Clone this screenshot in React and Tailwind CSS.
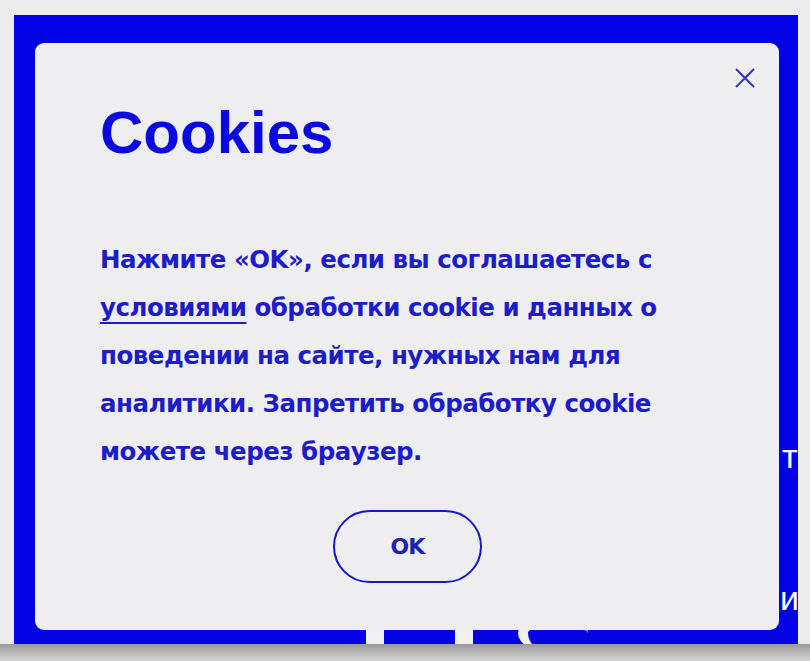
import React from 'react';

const font = { fontFamily: '"Liberation Sans", Arial, sans-serif' };
const bodyFont = { fontFamily: '"DejaVu Sans", Verdana, sans-serif' };

export default function App() {
  return (
    <div className="w-[810px] h-[661px] bg-[#ececec] flex flex-col overflow-hidden" style={font}>
      <div className="h-[15px]" />
      <div className="pl-[14px]">
        <div className="relative w-[784px] h-[629px] bg-[#0303e4] overflow-hidden pl-[21px] pt-[28px]">
          {/* page content behind the dialog */}
          <span className="absolute left-[768px] top-[424px] text-[34px] leading-none text-white font-normal">т</span>
          <span className="absolute left-[766px] top-[566px] text-[34px] leading-none text-white font-normal">и</span>
          <div className="absolute left-[352px] top-[600px] w-[18px] h-[40px] bg-[#f0f0f2]" />
          <div className="absolute left-[441px] top-[600px] w-[18px] h-[40px] bg-[#f0f0f2]" />
          <div className="absolute left-[504px] top-[598px] w-[70px] h-[40px] rounded-[50%] border-t-[12px] border-l-[10px] border-[#f0f0f2]" />

          <div className="relative w-[744px] h-[587px] bg-[#eeeef1] rounded-[9px] pl-[65px] pt-[54px]">
            <button className="absolute right-[24px] top-[25px] w-[20px] h-[20px] flex items-center justify-center text-[#3434c8]">
              <svg width="20" height="20" viewBox="0 0 20 20" fill="none" stroke="currentColor" strokeWidth="2">
                <path d="M1 1 L19 19 M19 1 L1 19" />
              </svg>
            </button>
            <h1 className="text-[60px] leading-[72px] font-bold text-[#0a0ae0]">Cookies</h1>
            <p className="mt-[67px] w-[610px] text-[24.5px] leading-[48px] font-bold text-[#1c1cc9] tracking-[-0.5px]" style={bodyFont}>
              Нажмите «OK», если вы соглашаетесь с{' '}
              <a className="underline decoration-2 underline-offset-[6px]">условиями</a> обработки cookie и данных о
              поведении на сайте, нужных нам для аналитики. Запретить обработку cookie можете через браузер.
            </p>
            <div className="mt-[34px] pl-[233px]">
              <button className="w-[149px] h-[73px] rounded-full border-[2.5px] border-[#1616cc] text-[22px] font-bold text-[#2020b8] tracking-[-0.8px]" style={bodyFont}>
                OK
              </button>
            </div>
          </div>
        </div>
      </div>
      <div className="h-[17px] bg-gradient-to-b from-[#9a9a9a] to-[#d6d6d6]" />
    </div>
  );
}
